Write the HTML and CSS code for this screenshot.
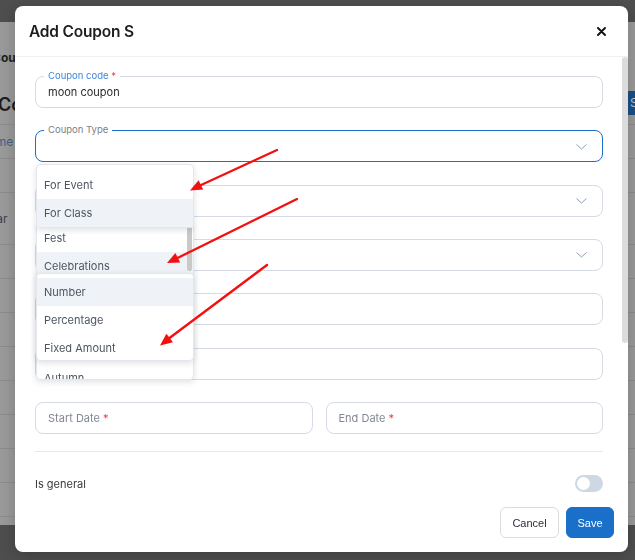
FILE: index.html
```html
<!DOCTYPE html>
<html lang="en">
<head>
<meta charset="utf-8">
<title>Add Coupon</title>
<link rel="stylesheet" href="styles.css">
</head>
<body>
<div class="app">
  <div class="app-crumb">Coupons</div>
  <div class="app-toolbar">
    <div class="app-title">Coupons</div>
    <div class="app-btn">Save</div>
  </div>
  <div class="app-table">
    <div class="app-row">Name</div>
    <div class="app-row"></div>
    <div class="app-row">Year</div>
    <div class="app-row"></div>
    <div class="app-row"></div>
    <div class="app-row"></div>
    <div class="app-row"></div>
    <div class="app-row"></div>
    <div class="app-row"></div>
    <div class="app-row"></div>
    <div class="app-row"></div>
  </div>
</div>

<div class="modal">
  <div class="modal-header">
    <h2 class="modal-title">Add Coupon S</h2>
    <svg class="close" width="9" height="9" viewBox="0 0 9 9"><path d="M1 1L8 8M8 1L1 8" stroke="#111" stroke-width="1.9" stroke-linecap="round"/></svg>
  </div>
  <div class="modal-body">
    <div class="modal-content">
      <div class="field">
        <span class="label label-blue">Coupon code <span class="req">*</span></span>
        <span class="value">moon coupon</span>
      </div>
      <div class="field field-focus">
        <span class="label">Coupon Type</span>
        <span class="value"></span>
        <svg class="chev" width="11" height="6" viewBox="0 0 11 6"><path d="M0.5 0.5L5.5 5L10.5 0.5" fill="none" stroke="#8f9bb3" stroke-width="1"/></svg>
      </div>
      <div class="field">
        <span class="value"></span>
        <svg class="chev" width="11" height="6" viewBox="0 0 11 6"><path d="M0.5 0.5L5.5 5L10.5 0.5" fill="none" stroke="#8f9bb3" stroke-width="1"/></svg>
      </div>
      <div class="field">
        <span class="value"></span>
        <svg class="chev" width="11" height="6" viewBox="0 0 11 6"><path d="M0.5 0.5L5.5 5L10.5 0.5" fill="none" stroke="#8f9bb3" stroke-width="1"/></svg>
      </div>
      <div class="field"><span class="value"></span></div>
      <div class="field"><span class="value"></span></div>
      <div class="date-row">
        <div class="field"><span class="placeholder">Start Date <span class="req">*</span></span></div>
        <div class="field"><span class="placeholder">End Date <span class="req">*</span></span></div>
      </div>
      <div class="divider"></div>
      <div class="switch-row">
        <span class="switch-label">Is general</span>
        <span class="switch"><span class="knob"></span></span>
      </div>
    </div>
    <div class="scroll-track"><div class="scroll-thumb"></div></div>
  </div>
  <div class="modal-footer">
    <button class="btn btn-cancel">Cancel</button>
    <button class="btn btn-save">Save</button>
  </div>

  <div class="menu menu-b">
    <div class="menu-item">Fest</div>
    <div class="menu-item menu-item-hl">Celebrations</div>
    <div class="menu-item">Holiday</div>
    <div class="menu-item">Winter</div>
    <div class="menu-item">Summer</div>
    <div class="menu-item">Autumn</div>
    <div class="menu-thumb"></div>
  </div>
  <div class="menu menu-a">
    <div class="menu-item">For Event</div>
    <div class="menu-item menu-item-hl">For Class</div>
  </div>
  <div class="menu menu-c">
    <div class="menu-item menu-item-hl">Number</div>
    <div class="menu-item">Percentage</div>
    <div class="menu-item">Fixed Amount</div>
  </div>
</div>

<svg class="arrows" width="635" height="560" viewBox="0 0 635 560">
  <g stroke="#f21111" stroke-width="2.4" stroke-linecap="round">
    <line x1="277" y1="150" x2="200" y2="185.5"/>
    <line x1="297" y1="199" x2="177.5" y2="258"/>
    <line x1="267" y1="265" x2="169.5" y2="338"/>
  </g>
  <g fill="#f21111">
    <polygon points="190,190.5 198.6,180.2 203.2,189.6"/>
    <polygon points="167,263 175.4,252.9 180.2,262.4"/>
    <polygon points="160,345.5 166.4,333.8 173,342.2"/>
  </g>
</svg>
</body>
</html>
```

FILE: styles.css
```css
* { box-sizing: border-box; }

html, body {
  margin: 0;
  padding: 0;
  width: 635px;
  height: 560px;
  overflow: hidden;
}

body {
  background: #4e4e4e;
  font-family: Inter, "DejaVu Sans", sans-serif;
  padding-top: 22px;
}

/* dimmed page behind the dialog */
.app {
  height: 503px;
  background: #9a9a9a;
  padding-top: 28px;
  overflow: hidden;
}
.app-crumb {
  font-size: 12px;
  font-weight: 700;
  color: #1f1f1f;
  margin-left: -8px;
  height: 16px;
  line-height: 16px;
}
.app-toolbar {
  display: flex;
  justify-content: space-between;
  align-items: center;
  margin-top: 26px;
  height: 24px;
}
.app-title {
  font-size: 18px;
  font-weight: 600;
  color: #1c1c1c;
  margin-left: -2px;
}
.app-btn {
  width: 40px;
  height: 24px;
  background: #1b4f86;
  color: #b9c6d6;
  font-size: 12px;
  line-height: 24px;
  padding-left: 2px;
  margin-right: -33px;
  margin-top: -2px;
}
.app-table {
  margin-top: 8px;
  border-top: 1px solid #8c8c8c;
}
.app-row {
  height: 34px;
  border-bottom: 1px solid #8c8c8c;
  font-size: 12px;
  color: #3f5f86;
  line-height: 34px;
  margin-left: -22px;
  padding-left: 2px;
}
.app-row:nth-child(3) { color: #404040; margin-left: -20px; line-height: 52px; height: 52px; }

/* dialog */
.modal {
  position: fixed;
  left: 15px;
  top: 6px;
  width: 613px;
  height: 546px;
  background: #fff;
  border-radius: 8px;
  display: flex;
  flex-direction: column;
  box-shadow: 0 4px 16px rgba(0, 0, 0, 0.2);
}

.modal-header {
  height: 51px;
  flex: none;
  display: flex;
  align-items: center;
  justify-content: space-between;
  padding: 0 22px 0 14px;
  border-bottom: 1px solid #eef0f3;
}
.modal-title {
  margin: 0;
  font-size: 15.5px;
  font-weight: 600;
  color: #1d1d1f;
  letter-spacing: -0.2px;
}
.close { display: block; }

.modal-body {
  flex: 1;
  display: flex;
  min-height: 0;
}
.modal-content {
  flex: 1;
  padding: 19px 19px 0 20px;
  display: flex;
  flex-direction: column;
  gap: 22.33px;
}
.scroll-track {
  width: 6px;
  flex: none;
}
.scroll-thumb {
  width: 6px;
  height: 286px;
  background: #dcdcdc;
  border-radius: 3px;
}

.field {
  position: relative;
  height: 32px;
  flex: none;
  border: 1px solid #d6dae3;
  border-radius: 8px;
  display: flex;
  align-items: center;
  padding: 0 12px;
  font-size: 11px;
  color: #2b2b2b;
}
.field-focus {
  border-color: #1b6fc8;
}
.label {
  position: absolute;
  left: 8px;
  top: -7px;
  padding: 0 4px;
  background: #fff;
  font-size: 9.5px;
  line-height: 12px;
  color: #7a7f88;
}
.label-blue { color: #3d86d8; }
.req { color: #e84545; }
.value { flex: 1; }
.placeholder { color: #838892; font-size: 11px; }
.chev {
  display: block;
  margin-right: 3px;
  margin-top: 1px;
}

.date-row {
  display: flex;
  gap: 13px;
}
.date-row .field { flex: 1; }

.divider {
  height: 1px;
  background: #e6e8ec;
  margin-top: -5px;
  flex: none;
}
.switch-row {
  display: flex;
  justify-content: space-between;
  align-items: center;
  height: 18px;
}
.switch-label {
  font-size: 11px;
  color: #3a3a3a;
}
.switch {
  width: 28px;
  height: 17px;
  border-radius: 9px;
  background: #ced8e4;
  display: flex;
  align-items: center;
  padding-left: 2px;
}
.knob {
  width: 13px;
  height: 13px;
  border-radius: 50%;
  background: #fff;
}

.modal-footer {
  flex: none;
  height: 45px;
  display: flex;
  justify-content: flex-end;
  align-items: flex-start;
  gap: 7px;
  padding: 0 14px 14px;
}
.btn {
  height: 31px;
  border-radius: 6px;
  font-family: "Liberation Sans", Arial, sans-serif;
  font-size: 11px;
  padding: 0;
  cursor: pointer;
}
.btn-cancel {
  width: 59px;
  background: #fff;
  border: 1px solid #dadce0;
  color: #2f2f3a;
}
.btn-save {
  width: 48px;
  background: #1a6fc8;
  border: 1px solid #1a6fc8;
  color: #fff;
}

/* open dropdown menus */
.menu {
  position: absolute;
  left: 21px;
  width: 158px;
  background: #fff;
  border: 1px solid #e3e6ec;
  border-radius: 4px;
  box-shadow: 0 2px 6px rgba(30, 40, 60, 0.14);
  overflow: hidden;
}
.menu-a { top: 158px; padding-top: 6px; }
.menu-b { top: 217px; height: 157px; }
.menu-c { top: 267px; padding-top: 4px; height: 88px; }
.menu-item {
  height: 28px;
  line-height: 28px;
  padding-left: 7px;
  font-size: 11px;
  color: #4d5562;
}
.menu-item-hl { background: #eff2f7; }
.menu-b .menu-item:nth-child(3),
.menu-b .menu-item:nth-child(4),
.menu-b .menu-item:nth-child(5) { visibility: hidden; }
.menu-thumb {
  position: absolute;
  right: 1px;
  top: 1px;
  width: 5px;
  height: 46px;
  border-radius: 3px;
  background: #c9c9c9;
}

.arrows {
  position: fixed;
  left: 0;
  top: 0;
  pointer-events: none;
}
```
